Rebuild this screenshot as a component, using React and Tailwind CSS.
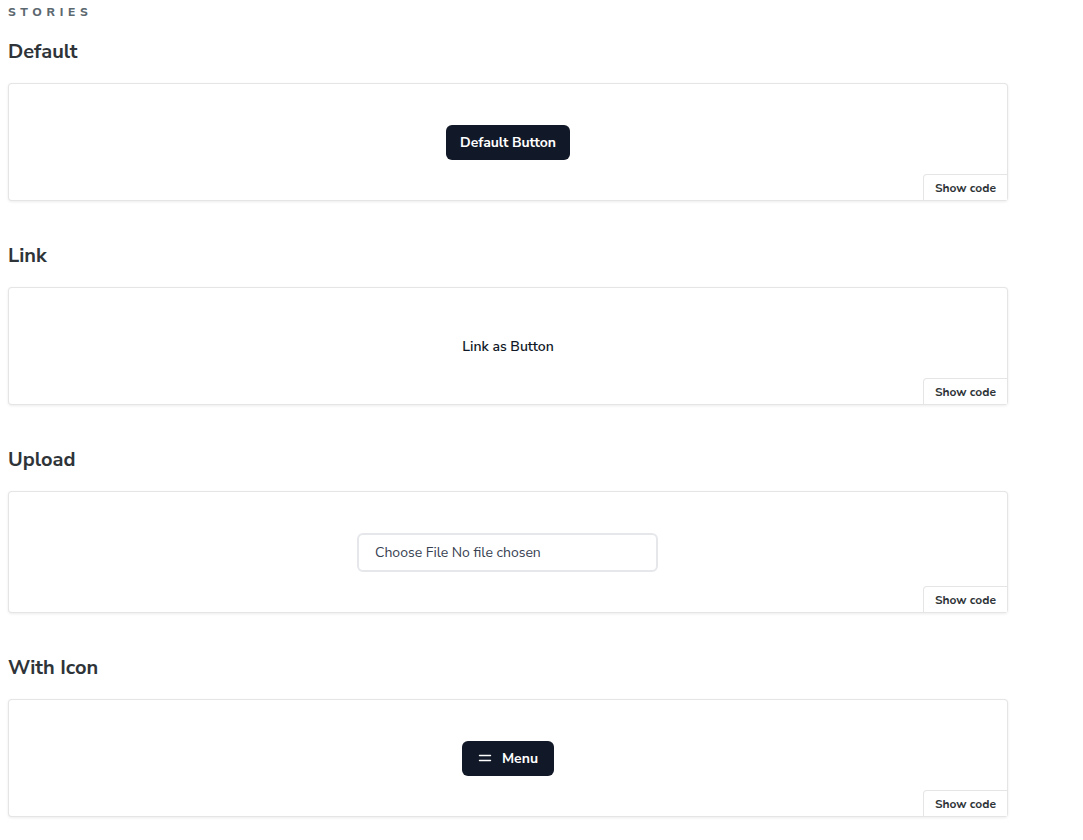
import React from "react";

const font = { fontFamily: '"Nunito Sans", Lato, "Open Sans", sans-serif' };

function Card({ children, h = "h-[118px]" }) {
  return (
    <div className={`relative rounded-[4px] border border-[rgba(0,0,0,0.1)] shadow-[0_1px_3px_0_rgba(0,0,0,0.08)] bg-white ${h} flex items-center justify-center`}>
      {children}
      <button className="absolute right-0 bottom-0 h-[26px] px-[11px] bg-white border-t border-l border-[rgba(0,0,0,0.1)] rounded-tl-[4px] text-[12px] font-bold text-[#2e3438] leading-none">
        Show code
      </button>
    </div>
  );
}

function Section({ title, children, h, first }) {
  return (
    <div className={first ? "mt-[20px]" : "mt-[42px]"}>
      <h3 className="text-[20px] font-bold text-[#2e3438] leading-[24px] pt-[1px] mb-[19px]">{title}</h3>
      <Card h={h}>{children}</Card>
    </div>
  );
}

export default function App() {
  return (
    <div className="bg-white min-h-[840px] w-[1083px] pl-2 pr-[75px]" style={font}>
      <div className="text-[12px] font-extrabold tracking-[0.4em] text-[#5c6870] pt-[5px] leading-[14px]">STORIES</div>
      <Section title="Default" first>
        <button className="h-[35px] px-[14px] rounded-[6px] bg-[#111827] text-white text-[14px] font-bold tracking-[-0.005em]">Default Button</button>
      </Section>
      <Section title="Link">
        <a className="h-[36px] px-4 inline-flex items-center text-[14px] font-semibold text-[#111827]">Link as Button</a>
      </Section>
      <Section title="Upload" h="h-[122px]">
        <div className="w-[301px] h-[39px] rounded-[6px] border-2 border-[#e5e7eb] flex items-center px-4 text-[14px] text-[#374151] mr-[1px]">
          Choose File No file chosen
        </div>
      </Section>
      <Section title="With Icon">
        <button className="h-[35px] px-4 rounded-[6px] bg-[#111827] text-white text-[14px] font-bold inline-flex items-center gap-[10px]">
          <svg width="14" height="14" viewBox="0 0 14 14" fill="none" stroke="white" strokeWidth="1.4" strokeLinecap="round">
            <path d="M1.5 4.5h11M1.5 9.5h11" />
          </svg>
          Menu
        </button>
      </Section>
    </div>
  );
}
